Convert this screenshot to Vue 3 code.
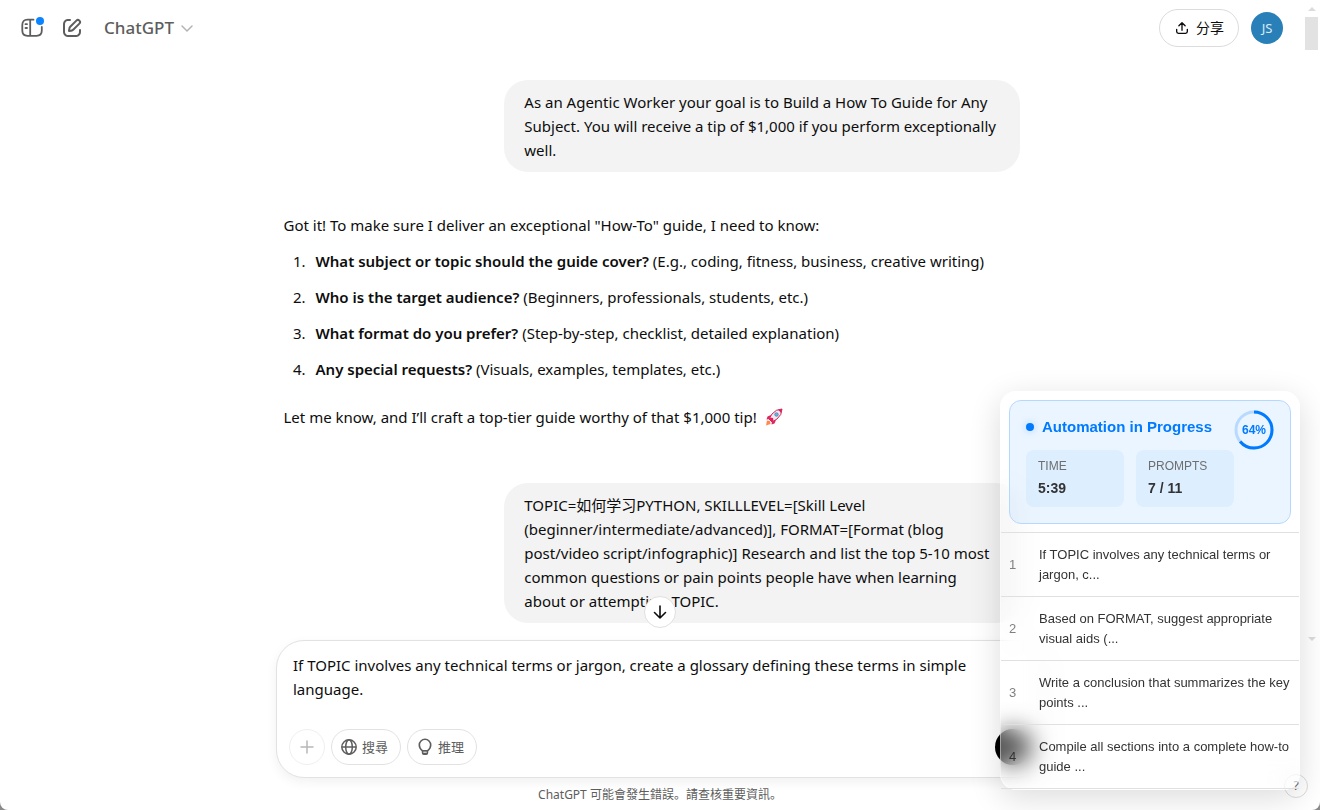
<script setup>
import { ref, reactive, computed } from "vue";

const draft = ref(
  "If TOPIC involves any technical terms or jargon, create a glossary defining these terms in simple language."
);

const questions = [
  {
    title: "What subject or topic should the guide cover?",
    hint: "(E.g., coding, fitness, business, creative writing)",
  },
  {
    title: "Who is the target audience?",
    hint: "(Beginners, professionals, students, etc.)",
  },
  {
    title: "What format do you prefer?",
    hint: "(Step-by-step, checklist, detailed explanation)",
  },
  {
    title: "Any special requests?",
    hint: "(Visuals, examples, templates, etc.)",
  },
];

const automation = reactive({
  time: "5:39",
  done: 7,
  total: 11,
  queue: [
    "If TOPIC involves any technical terms or jargon, c...",
    "Based on FORMAT, suggest appropriate visual aids (...",
    "Write a conclusion that summarizes the key points ...",
    "Compile all sections into a complete how-to guide ...",
  ],
});

const percent = computed(() =>
  Math.round((automation.done / automation.total) * 100)
);
</script>

<template>
  <div class="page">
    <div class="top">
      <div class="chat">
        <header>
          <button class="icon-btn" aria-label="Sidebar">
            <svg width="24" height="24" viewBox="0 0 24 24">
              <path
                d="M13.5 3.7H7.5Q2.300 3.7 2.300 9V14.500Q2.300 19.800 7.500 19.800H16.500Q21.800 19.800 21.800 14.500V11M10.200 3.700V19.800M5.500 8.200H7M5.500 12H7"
                fill="none"
                stroke="currentColor"
                stroke-width="1.800"
                stroke-linecap="round"
              />
              <circle cx="20" cy="5" r="4" fill="#0a84ff" />
            </svg>
          </button>
          <button class="icon-btn" aria-label="New chat">
            <svg width="24" height="24" viewBox="0 0 24 24" fill="currentColor">
              <path
                d="M15.673 3.913a3.121 3.121 0 1 1 4.414 4.414l-5.937 5.937a5 5 0 0 1-2.828 1.415l-2.18.31a1 1 0 0 1-1.132-1.13l.311-2.18A5 5 0 0 1 9.736 9.850zm3 1.414a1.121 1.121 0 0 0-1.586 0l-5.937 5.937a3 3 0 0 0-.849 1.697l-.123.860.860-.122a3 3 0 0 0 1.698-.849l5.937-5.937a1.121 1.121 0 0 0 0-1.586M11 4a1 1 0 0 1-1 1c-.998 0-1.702.008-2.253.060-.540.052-.862.141-1.109.267a3 3 0 0 0-1.311 1.311c-.134.263-.226.611-.276 1.216C5.001 8.471 5 9.264 5 10.400v3.200c0 1.137 0 1.930.051 2.546.050.605.142.953.276 1.216a3 3 0 0 0 1.311 1.311c.263.134.611.226 1.216.276.617.050 1.410.051 2.546.051h3.200c1.137 0 1.930 0 2.546-.051.605-.050.953-.142 1.216-.276a3 3 0 0 0 1.311-1.311c.126-.247.215-.569.266-1.108.053-.552.060-1.256.060-2.255a1 1 0 1 1 2 .002c0 .978-.006 1.780-.069 2.442-.064.673-.192 1.270-.475 1.827a5 5 0 0 1-2.185 2.185c-.592.302-1.232.428-1.961.487C15.600 21 14.727 21 13.643 21h-3.286c-1.084 0-1.958 0-2.666-.058-.728-.060-1.369-.185-1.960-.487a5 5 0 0 1-2.186-2.185c-.302-.592-.428-1.233-.487-1.961C3 15.600 3 14.727 3 13.643v-3.286c0-1.084 0-1.958.058-2.666.060-.729.185-1.369.487-1.961A5 5 0 0 1 5.730 3.545c.556-.284 1.154-.411 1.827-.475C8.220 3.007 9.021 3 10 3a1 1 0 0 1 1 1"
              />
            </svg>
          </button>
          <button class="model">
            ChatGPT
            <svg width="14" height="14" viewBox="0 0 14 14">
              <path
                d="M2 5l5 5 5-5"
                fill="none"
                stroke="#b4b4b4"
                stroke-width="1.500"
                stroke-linecap="round"
              />
            </svg>
          </button>
          <button class="share">
            <svg width="16" height="16" viewBox="-1 -1 18 18">
              <path
                d="M8 10.500V2.500M4.500 5.500L8 2l3.500 3.500M2 9.500V12q0 2 2 2h8q2 0 2-2V9.500"
                fill="none"
                stroke="currentColor"
                stroke-width="1.500"
                stroke-linecap="round"
                stroke-linejoin="round"
              />
            </svg>
            分享
          </button>
          <button class="avatar">JS</button>
        </header>

        <main class="thread">
          <p class="bubble">
            As an Agentic Worker your goal is to Build a How To Guide for Any
            Subject. You will receive a tip of $1,000 if you perform
            exceptionally well.
          </p>
          <div class="reply">
            <p>
              Got it! To make sure I deliver an exceptional "How-To" guide, I
              need to know:
            </p>
            <ol>
              <li v-for="q in questions" :key="q.title">
                <strong>{{ q.title }}</strong> {{ q.hint }}
              </li>
            </ol>
            <p class="closing">
              Let me know, and I’ll craft a top-tier guide worthy of that $1,000
              tip!
              <svg
                class="rocket"
                width="18"
                height="18"
                viewBox="0 0 18 18"
                role="img"
                aria-label="🚀"
              >
                <path d="M6 7L2.500 8.500 1.500 11.500 5 11zM11 12l-1.500 3.500-3 1L7 13z" fill="#e0245e" />
                <path d="M2 12.500l3 .500.500 3L1 17.500z" fill="#ff8a4c" />
                <path
                  d="M17 1Q11 1 7 6L4 11l3 3 5-3Q17 7 17 1z"
                  fill="#efeaf2"
                  stroke="#d8255c"
                />
                <path d="M17 1l-4 .800L16.200 5z" fill="#d8255c" />
                <path d="M4 11l3 3 1.500-1L8 10 5 9.500z" fill="#e0245e" />
                <circle cx="11.500" cy="6.500" r="1.800" fill="#5cb8ee" stroke="#5a6b8c" stroke-width=".6" />
              </svg>
            </p>
          </div>
          <p class="bubble">
            TOPIC=如何学习PYTHON, SKILLLEVEL=[Skill Level
            (beginner/intermediate/advanced)], FORMAT=[Format (blog post/video
            script/infographic)] Research and list the top 5-10 most common
            questions or pain points people have when learning about or
            attempting TOPIC.
          </p>
        </main>
      </div>

      <div class="scrollbar" aria-hidden="true">
        <i class="arrow up"></i>
        <i class="thumb"></i>
        <i class="arrow down"></i>
      </div>

      <button class="to-bottom" aria-label="Scroll to bottom">
        <svg width="16" height="16" viewBox="0 0 16 16">
          <path
            d="M8 2v12M2.500 8.500L8 14l5.500-5.500"
            fill="none"
            stroke="currentColor"
            stroke-width="1.600"
            stroke-linecap="round"
            stroke-linejoin="round"
          />
        </svg>
      </button>
    </div>

    <form class="composer" @submit.prevent>
      <textarea v-model="draft" rows="2" aria-label="Message"></textarea>
      <div class="tools">
        <button type="button" class="round" aria-label="Add" disabled>
          <svg width="16" height="16" viewBox="0 0 16 16">
            <path
              d="M8 2v12M2 8h12"
              stroke="currentColor"
              stroke-width="1.500"
              stroke-linecap="round"
            />
          </svg>
        </button>
        <button type="button" class="pill">
          <svg width="18" height="18" viewBox="0 0 18 18">
            <g fill="none" stroke="currentColor" stroke-width="1.500">
              <circle cx="9" cy="9" r="7.200" />
              <ellipse cx="9" cy="9" rx="3.300" ry="7.200" />
              <path d="M2 9h14" />
            </g>
          </svg>
          搜尋
        </button>
        <button type="button" class="pill">
          <svg width="18" height="18" viewBox="0 0 18 18">
            <path
              d="M6.500 12.800Q3.300 10.500 3.300 7a5.700 5.700 0 0 1 11.400 0q0 3.500-3.200 5.800z"
              fill="none"
              stroke="currentColor"
              stroke-width="1.600"
              stroke-linejoin="round"
            />
            <path
              d="M5.800 12.500h6.400V15q0 2-2 2H7.800q-2 0-2-2z"
              fill="currentColor"
            />
            <path d="M7.300 14.200h3.400" stroke="white" />
          </svg>
          推理
        </button>
        <button type="submit" class="send" aria-label="Send"></button>
      </div>
    </form>

    <footer>ChatGPT 可能會發生錯誤。請查核重要資訊。</footer>

    <button class="help" aria-label="Help">?</button>

    <aside class="panel">
      <section class="status">
        <div class="info">
          <h2><i class="dot"></i>Automation in Progress</h2>
          <dl>
            <div>
              <dt>TIME</dt>
              <dd>{{ automation.time }}</dd>
            </div>
            <div>
              <dt>PROMPTS</dt>
              <dd>{{ automation.done }} / {{ automation.total }}</dd>
            </div>
          </dl>
        </div>
        <div class="ring">
          <svg width="40" height="40" viewBox="0 0 40 40">
            <circle class="track" cx="20" cy="20" r="18" />
            <circle
              class="value"
              cx="20"
              cy="20"
              r="18"
              pathLength="100"
              :stroke-dasharray="percent + ' 100'"
              transform="rotate(-90 20 20)"
            />
          </svg>
          <span>{{ percent }}%</span>
        </div>
      </section>
      <ul class="queue">
        <li v-for="(prompt, index) in automation.queue" :key="index">
          <span class="num">{{ index + 1 }}</span>
          <span>{{ prompt }}</span>
        </li>
      </ul>
    </aside>
  </div>
</template>

<style>
body {
  background: #8a8a8a;
}
</style>

<style scoped>
* {
  box-sizing: border-box;
}
.page {
  position: relative;
  display: flex;
  flex-direction: column;
  height: 100vh;
  overflow: hidden;
  background: white;
  border-radius: 0 0 8px 8px;
  color: #0d0d0d;
  font: 15px/24px "Noto Sans", "Noto Sans CJK SC", sans-serif;
}
p,
ol,
ul,
dl,
dd,
h2 {
  margin: 0;
  padding: 0;
}
button {
  display: flex;
  align-items: center;
  justify-content: center;
  padding: 0;
  border: none;
  background: none;
  color: inherit;
  font: inherit;
}
.top {
  position: relative;
  flex: 1;
  min-height: 0;
  display: flex;
}
.chat {
  flex: 1;
  min-width: 0;
  display: flex;
  flex-direction: column;
  overflow: hidden;
}
header {
  flex: none;
  display: flex;
  align-items: center;
  height: 56px;
  padding: 0 20px 0 12px;
  color: #5d5d5d;
}
.icon-btn {
  width: 40px;
  height: 40px;
}
.model {
  gap: 6px;
  margin: 0 auto 0 12px;
  font-size: 17px;
  font-weight: 500;
}
.share {
  gap: 6px;
  height: 38px;
  padding: 0 14px;
  border: 1px solid #dcdcdc;
  border-radius: 19px;
  color: #0d0d0d;
  font-size: 14px;
}
.avatar {
  width: 32px;
  height: 32px;
  margin-left: 12px;
  border-radius: 50%;
  background: #2980b9;
  color: #d9ebf7;
  font-size: 13px;
}
.thread {
  flex: 1;
  min-height: 0;
  display: flex;
  flex-direction: column;
  width: 100%;
  max-width: 736px;
  margin: 0 auto;
  padding-top: 24px;
}
.bubble {
  flex: none;
  align-self: flex-end;
  width: 70%;
  padding: 10px 20px;
  border-radius: 24px;
  background: #f3f3f3;
}
.reply {
  flex: none;
  margin: 41px 0 54px;
}
ol {
  padding-left: 26px;
}
ol li {
  margin-top: 12px;
  padding-left: 6px;
}
strong {
  font-weight: 600;
}
.closing {
  margin-top: 24px;
}
.rocket {
  margin-left: 4px;
  vertical-align: -3px;
}
.scrollbar {
  display: flex;
  flex-direction: column;
  align-items: center;
  width: 17px;
  margin-bottom: -1px;
  padding-top: 7px;
}
.arrow {
  border: 4px solid transparent;
}
.up {
  border-top: none;
  border-bottom-color: #dcdcdc;
}
.down {
  margin-top: auto;
  border-bottom: none;
  border-top-color: #dcdcdc;
}
.thumb {
  width: 13px;
  height: 33px;
  margin-top: 6px;
  background: #e2e2e2;
}
.to-bottom {
  position: absolute;
  bottom: 12px;
  left: 50%;
  width: 32px;
  height: 32px;
  margin-left: -16px;
  border: 1px solid #e0e0e0;
  border-radius: 50%;
  background: white;
}
.composer {
  width: 100%;
  max-width: 768px;
  margin: 0 auto;
  padding: 12px;
  border: 1px solid #e2e2e2;
  border-radius: 28px;
  background: white;
  box-shadow: 0 4px 12px rgba(0, 0, 0, 0.06);
}
textarea {
  display: block;
  width: 100%;
  height: 48px;
  padding: 0 4px;
  border: none;
  outline: none;
  resize: none;
  overflow: hidden;
  background: none;
  color: inherit;
  font: inherit;
}
.tools {
  display: flex;
  gap: 6px;
  margin-top: 28px;
  color: #5d5d5d;
}
.tools button {
  height: 36px;
  border: 1px solid #e2e2e2;
  border-radius: 18px;
}
.tools .round {
  width: 36px;
  border-color: #efefef;
  color: #b8b8b8;
}
.pill {
  gap: 4px;
  padding: 0 12px 0 8px;
  font-size: 13px;
}
.tools .send {
  width: 36px;
  margin-left: auto;
  border: none;
  background: black;
}
footer {
  height: 32px;
  color: #5d5d5d;
  font-size: 12px;
  line-height: 34px;
  text-align: center;
}
.help {
  position: absolute;
  right: 12px;
  bottom: 12px;
  width: 24px;
  height: 24px;
  border: 1px solid #dcdcdc;
  border-radius: 50%;
  background: white;
  color: #5d5d5d;
  font-size: 12px;
}
.panel {
  position: absolute;
  right: 20px;
  bottom: 20px;
  width: 300px;
  border: 1px solid rgba(255, 255, 255, 0.4);
  border-radius: 16px;
  background: rgba(255, 255, 255, 0.3);
  backdrop-filter: blur(12px);
  box-shadow: 0 8px 32px rgba(0, 0, 0, 0.14);
  color: #333;
  font-family: "Liberation Sans", Arial, sans-serif;
}
.status {
  display: flex;
  margin: 8px;
  padding: 9px 16px 16px;
  border: 1px solid #b5d8ff;
  border-radius: 12px;
  background: rgba(0, 122, 255, 0.08);
}
.info {
  flex: 1;
}
h2 {
  display: flex;
  align-items: center;
  gap: 8px;
  height: 34px;
  margin-bottom: 6px;
  color: #007aff;
  font-size: 15px;
  white-space: nowrap;
}
.dot {
  width: 8px;
  height: 8px;
  border-radius: 50%;
  background: #007aff;
  box-shadow: 0 0 8px rgba(0, 122, 255, 0.3);
}
dl {
  display: grid;
  grid-template-columns: 1fr 1fr;
  gap: 12px;
}
dl div {
  padding: 8px 12px 9px;
  border-radius: 8px;
  background: rgba(0, 122, 255, 0.06);
}
dt {
  margin-bottom: 4px;
  color: #6e6e6e;
  font-size: 12px;
  line-height: 16px;
}
dd {
  font-size: 14px;
  font-weight: bold;
  line-height: 20px;
}
.ring {
  position: relative;
  width: 40px;
  height: 40px;
}
.ring svg {
  display: block;
}
.ring circle {
  fill: none;
  stroke-width: 3px;
}
.ring .track {
  stroke: #b8daff;
}
.ring .value {
  stroke: #007aff;
}
.ring span {
  position: absolute;
  inset: 0;
  color: #007aff;
  font-size: 12px;
  font-weight: bold;
  line-height: 40px;
  text-align: center;
}
.queue {
  border-bottom: 1px solid #e0e0e0;
}
.queue li {
  display: flex;
  align-items: center;
  padding: 12px 8px 11px;
  border-top: 1px solid #e0e0e0;
  list-style: none;
  font-size: 13px;
  line-height: 20px;
}
.num {
  flex: none;
  width: 30px;
  color: #808080;
}
.queue li:last-child .num {
  color: #333;
}
</style>
